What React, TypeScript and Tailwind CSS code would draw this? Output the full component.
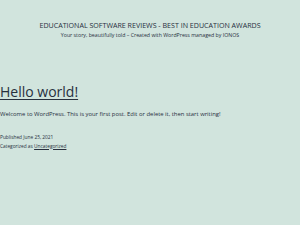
export default function App() {
  return (
    <div className="w-[300px] h-[225px] bg-[#d1e4dd] text-[#28303d] overflow-hidden" style={{ fontFamily: '"Open Sans", "Noto Sans", sans-serif' }}>
      <header className="pt-[21px] flex flex-col items-center">
        <div className="text-[7.1px] leading-[9px] uppercase">Educational Software Reviews - Best in Education Awards</div>
        <div className="text-[5.25px] leading-[8px] mt-[1px]">Your story, beautifully told – Created with WordPress managed by IONOS</div>
      </header>
      <main className="mt-[43.5px]">
        <h1 className="text-[14px] leading-[18px] underline decoration-[1px] underline-offset-[2px]">Hello world!</h1>
        <p className="text-[5.9px] leading-[8px] mt-[9.5px]">Welcome to WordPress. This is your first post. Edit or delete it, then start writing!</p>
        <div className="text-[4.8px] leading-[8.5px] mt-[15px]">
          <div>Published June 25, 2021</div>
          <div>Categorized as <span className="underline">Uncategorized</span></div>
        </div>
      </main>
    </div>
  );
}
